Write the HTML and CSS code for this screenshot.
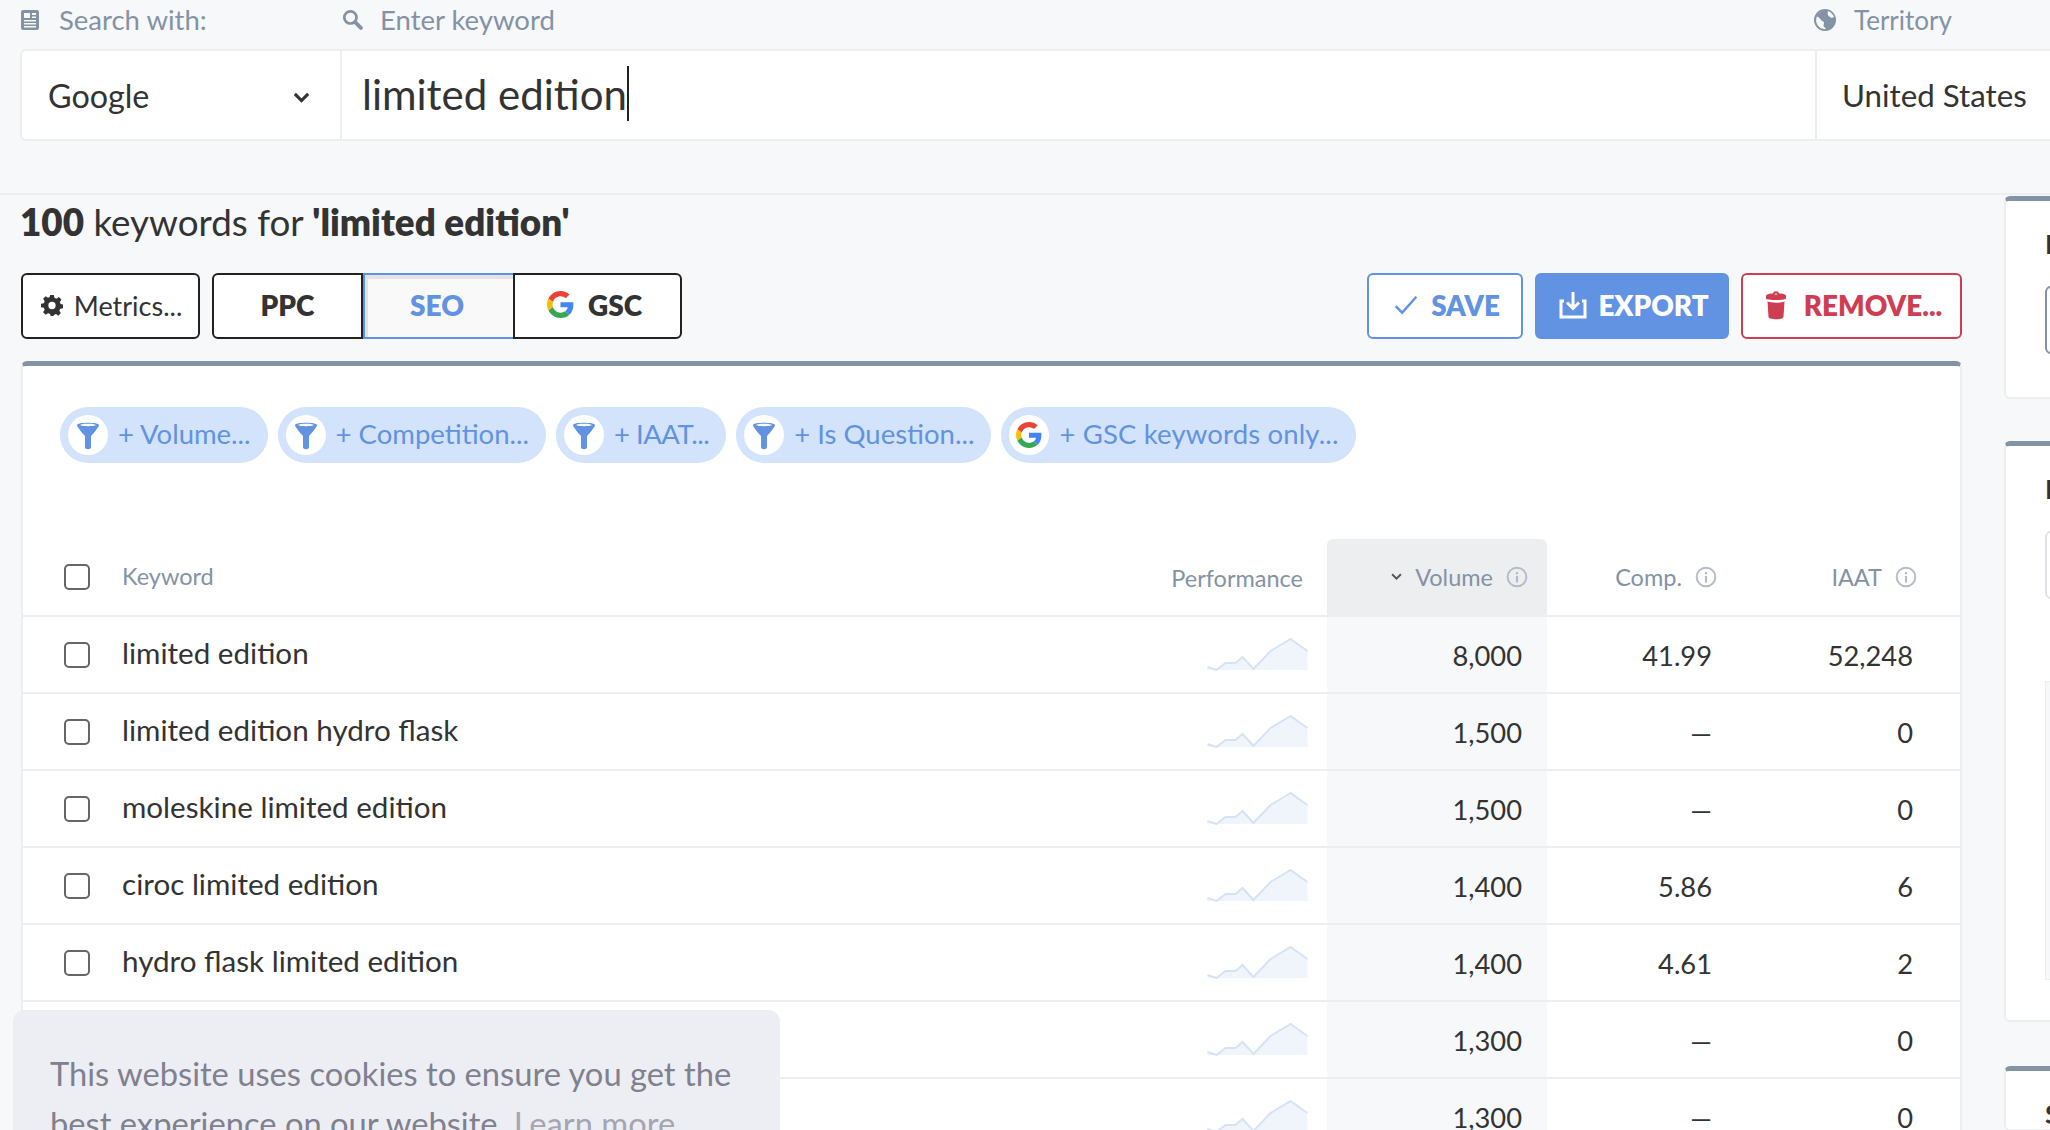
FILE: index.html
```html
<!DOCTYPE html>
<html lang="en">
  <head>
    <meta charset="UTF-8" />
    <title>Keyword Tool</title>
    <link rel="stylesheet" href="styles.css">
  </head>
  <body>
    <svg class="defs" width="0" height="0">
      <symbol id="spark" viewBox="0 0 100 33">
        <path d="M0 29L9 32L18 25L28 25L35 19L46 31L63 13L83 1L100 13V32H0Z" fill="#f0f4fb" />
        <path d="M0 29L9 32L18 25L28 25L35 19L46 31L63 13L83 1L100 13" fill="none" stroke="#d6e3f7" stroke-width="2" />
      </symbol>
      <symbol id="info" viewBox="0 0 20 20">
        <circle cx="10" cy="10" r="8.5" fill="none" stroke="#b5bcc7" stroke-width="1.8" />
        <rect x="9" y="9" width="2" height="6" fill="#b5bcc7" />
        <rect x="9" y="5.5" width="2" height="2" fill="#b5bcc7" />
      </symbol>
      <symbol id="funnel" viewBox="0 0 24 30">
        <path d="M1 5C1 2 23 2 23 5C23 7 17 14 15 16V27C15 30 9 30 9 27V16C7 14 1 7 1 5Z" fill="#6293e2" />
        <path d="M4 5C6 3.4 18 3.4 20 5C18 6.6 6 6.6 4 5Z" fill="#fff" />
      </symbol>
      <symbol id="google" viewBox="0 0 48 48">
        <path fill="#ea4335" d="M24 9.5c3.5 0 6.7 1.3 9.2 3.4l6.9-6.9C35.900 2.300 30.300 0 24 0 14.600 0 6.500 5.400 2.600 13.200l8 6.200C12.500 13.600 17.800 9.500 24 9.500z" />
        <path fill="#4285f4" d="M47 24.500c0-1.600-.1-3.100-.4-4.500H24v9h12.900c-.6 3-2.200 5.500-4.700 7.200l7.700 6C44.400 37.900 47 31.800 47 24.500z" />
        <path fill="#fbbc05" d="M10.600 28.600c-.5-1.400-.8-3-.8-4.600s.3-3.200.8-4.600l-8-6.200C.9 16.500 0 20.100 0 24s.9 7.500 2.600 10.800l8-6.200z" />
        <path fill="#34a853" d="M24 48c6.500 0 11.900-2.100 15.900-5.800l-7.700-6c-2.200 1.400-4.900 2.300-8.200 2.300-6.200 0-11.500-4.100-13.400-9.900l-8 6.200C6.500 42.600 14.600 48 24 48z" />
      </symbol>
    </svg>

    <header class="search">
      <div class="search-labels">
        <div class="search-label">
          <svg class="label-icon" viewBox="0 0 18 20"><path fill-rule="evenodd" d="M2 0H16A2 2 0 0 1 18 2V18A2 2 0 0 1 16 20H2A2 2 0 0 1 0 18V2A2 2 0 0 1 2 0ZM3 3V8H9V3ZM11 3V5H15V3ZM11 6.500V8H15V6.500ZM3 10V11.500H15V10ZM3 13V14.500H15V13ZM3 16V17.500H15V16Z" fill="#8492a6" /></svg>
          <span>Search with:</span>
        </div>
        <div class="search-label search-label-keyword">
          <svg class="label-icon" viewBox="0 0 20 20"><circle cx="8" cy="8" r="5.800" fill="none" stroke="#8492a6" stroke-width="2.600" /><path d="M12.500 12.500L18 18" stroke="#8492a6" stroke-width="3.600" stroke-linecap="round" /></svg>
          <span>Enter keyword</span>
        </div>
        <div class="search-label territory-label">
          <svg class="label-icon globe" viewBox="0 0 22 22"><circle cx="11" cy="11" r="11" fill="#8492a6" /><path d="M10 1.500C7 2 4 4.500 3 7.500L5 8.500L8 12L10 13L9.500 17L12 20C10 20.500 5 20 2.500 14C1 9 4 3 10 1.500ZM14 2C17 3 19.500 6 20 8L17.500 9L14.500 7L13.500 5Z" fill="#f7f8fa" /></svg>
          <span>Territory</span>
        </div>
      </div>
      <div class="search-box">
        <div class="engine">
          <span>Google</span>
          <svg class="chevron" viewBox="0 0 14 9"><path d="M1.500 1.500L7 7L12.500 1.500" fill="none" stroke="#333" stroke-width="2.600" /></svg>
        </div>
        <div class="keyword-input"><span>limited edition</span><i class="caret"></i></div>
        <div class="territory">United States</div>
      </div>
    </header>

    <div class="layout">
      <main class="results">
        <h1 class="results-title"><b>100</b> keywords for <b>'limited edition'</b></h1>

        <div class="toolbar">
          <button class="btn btn-dark btn-metrics">
            <svg class="btn-icon-sm gear" viewBox="0 0 24 24"><path fill-rule="evenodd" d="M10 1H14L14.600 4.200L16.800 5.100L19.500 3.300L22.300 6.100L20.500 8.800L21.400 11L24 11.500V15.500L21 16L20 18.200L21.700 20.800L18.900 23.600L16.300 21.900L14.100 22.800L13.500 24H10.500L9.900 21.800L7.700 20.900L5.100 22.600L2.300 19.800L4 17.200L3.100 15L0 14.500V10.500L3.100 10L4 7.800L2.300 5.200L5.100 2.400L7.700 4.100L9.400 3.400ZM12 8.500A4 4 0 1 0 12 16.500A4 4 0 1 0 12 8.500Z" fill="#333" /></svg>
            Metrics...
          </button>
          <div class="tabs">
            <button class="tab">PPC</button>
            <button class="tab tab-active">SEO</button>
            <button class="tab"><svg class="g-icon"><use href="#google" /></svg>GSC</button>
          </div>
          <div class="actions">
            <button class="btn btn-save">
              <svg class="btn-icon-sm" viewBox="0 0 22 18"><path d="M1.500 10L7.500 16L20.500 1.500" fill="none" stroke="#6293e2" stroke-width="2.200" /></svg>
              SAVE
            </button>
            <button class="btn btn-export">
              <svg class="btn-icon" viewBox="0 0 28 28"><path d="M14 1V17M8 11.500L14 17.500L20 11.500" fill="none" stroke="#fff" stroke-width="3" /><path d="M5 10H2V26H26V10H23" fill="none" stroke="#fff" stroke-width="3" /></svg>
              EXPORT
            </button>
            <button class="btn btn-remove">
              <svg class="btn-icon trash" viewBox="0 0 22 30"><path fill-rule="evenodd" d="M1 6C1 4 6 3.500 8 3.500C8.500 0.500 13.500 0.500 14 3.500C16 3.500 21 4 21 6V8.500C21 10.500 1 10.500 1 8.500ZM9.500 4.500C10 3 12 3 12.500 4.500Z" fill="#cf3d52" /><path d="M2.500 11.500C6 13 16 13 19.500 11.500L18.500 27C18 30 4 30 3.500 27Z" fill="#cf3d52" /></svg>
              REMOVE...
            </button>
          </div>
        </div>

        <section class="card">
          <div class="chips">
            <div class="chip"><span class="chip-icon"><svg><use href="#funnel" /></svg></span>+ Volume...</div>
            <div class="chip"><span class="chip-icon"><svg><use href="#funnel" /></svg></span>+ Competition...</div>
            <div class="chip chip-tight"><span class="chip-icon"><svg><use href="#funnel" /></svg></span>+ IAAT...</div>
            <div class="chip"><span class="chip-icon"><svg><use href="#funnel" /></svg></span>+ Is Question...</div>
            <div class="chip chip-wide"><span class="chip-icon"><svg class="chip-g"><use href="#google" /></svg></span>+ GSC keywords only...</div>
          </div>

          <div class="row row-head">
            <div class="cell-check"><span class="checkbox"></span></div>
            <div class="cell-name">Keyword</div>
            <div class="cell-perf">Performance</div>
            <div class="cell-num cell-volume">
              <svg class="sort" viewBox="0 0 10 7"><path d="M1 1L5 5L9 1" fill="none" stroke="#555" stroke-width="1.800" /></svg>
              Volume <svg class="info"><use href="#info" /></svg>
            </div>
            <div class="cell-num cell-comp">Comp. <svg class="info"><use href="#info" /></svg></div>
            <div class="cell-num cell-iaat">IAAT <svg class="info"><use href="#info" /></svg></div>
          </div>

          <div class="row">
            <div class="cell-check"><span class="checkbox"></span></div>
            <div class="cell-keyword">limited edition</div>
            <div class="cell-spark"><svg class="spark"><use href="#spark" /></svg></div>
            <div class="cell-num cell-volume">8,000</div>
            <div class="cell-num cell-comp">41.99</div>
            <div class="cell-num cell-iaat">52,248</div>
          </div>
          <div class="row">
            <div class="cell-check"><span class="checkbox"></span></div>
            <div class="cell-keyword">limited edition hydro flask</div>
            <div class="cell-spark"><svg class="spark"><use href="#spark" /></svg></div>
            <div class="cell-num cell-volume">1,500</div>
            <div class="cell-num cell-comp">—</div>
            <div class="cell-num cell-iaat">0</div>
          </div>
          <div class="row">
            <div class="cell-check"><span class="checkbox"></span></div>
            <div class="cell-keyword">moleskine limited edition</div>
            <div class="cell-spark"><svg class="spark"><use href="#spark" /></svg></div>
            <div class="cell-num cell-volume">1,500</div>
            <div class="cell-num cell-comp">—</div>
            <div class="cell-num cell-iaat">0</div>
          </div>
          <div class="row">
            <div class="cell-check"><span class="checkbox"></span></div>
            <div class="cell-keyword">ciroc limited edition</div>
            <div class="cell-spark"><svg class="spark"><use href="#spark" /></svg></div>
            <div class="cell-num cell-volume">1,400</div>
            <div class="cell-num cell-comp">5.86</div>
            <div class="cell-num cell-iaat">6</div>
          </div>
          <div class="row">
            <div class="cell-check"><span class="checkbox"></span></div>
            <div class="cell-keyword">hydro flask limited edition</div>
            <div class="cell-spark"><svg class="spark"><use href="#spark" /></svg></div>
            <div class="cell-num cell-volume">1,400</div>
            <div class="cell-num cell-comp">4.61</div>
            <div class="cell-num cell-iaat">2</div>
          </div>
          <div class="row">
            <div class="cell-check"></div>
            <div class="cell-keyword"></div>
            <div class="cell-spark"><svg class="spark"><use href="#spark" /></svg></div>
            <div class="cell-num cell-volume">1,300</div>
            <div class="cell-num cell-comp">—</div>
            <div class="cell-num cell-iaat">0</div>
          </div>
          <div class="row">
            <div class="cell-check"></div>
            <div class="cell-keyword"></div>
            <div class="cell-spark"><svg class="spark"><use href="#spark" /></svg></div>
            <div class="cell-num cell-volume">1,300</div>
            <div class="cell-num cell-comp">—</div>
            <div class="cell-num cell-iaat">0</div>
          </div>
        </section>
      </main>

      <aside class="side">
        <section class="side-card side-card-one">
          <h3 class="side-title">Keyword</h3>
          <div class="side-input side-input-dark"></div>
        </section>
        <section class="side-card side-card-two">
          <h3 class="side-title">Keyword</h3>
          <div class="side-input"></div>
          <div class="side-chart"></div>
        </section>
        <section class="side-card">
          <h3 class="side-title">SERP</h3>
        </section>
      </aside>
    </div>

    <div class="cookie">This website uses cookies to ensure you get the best experience on our website. <a>Learn more</a></div>
  </body>
</html>
```

FILE: styles.css
```css
* {
  box-sizing: border-box;
}

html,
body {
  height: 1130px;
  overflow: hidden;
}

body {
  margin: 0;
  width: 2050px;
  font-family: Lato, "Open Sans", sans-serif;
  color: #333;
  background-color: #f7f8fa;
}

button {
  font-family: inherit;
  cursor: pointer;
}

.defs {
  position: absolute;
}

/* search header */
.search {
  height: 195px;
  padding-left: 20px;
  border-bottom: 2px solid #eceef0;
}

.search-labels {
  display: grid;
  grid-template-columns: 320px 1475px 260px;
  height: 49px;
}

.search-label {
  display: flex;
  align-items: center;
  height: 39px;
  font-size: 27.5px;
  color: #8492a6;
}

.label-icon {
  width: 18px;
  height: 20px;
  margin-right: 20px;
  margin-left: 1px;
}

.search-label-keyword .label-icon {
  width: 21px;
  height: 21px;
  margin-right: 17px;
  margin-left: 2px;
}

.territory-label {
  margin-left: -2px;
  font-size: 26px;
}

.territory-label .globe {
  width: 22px;
  height: 22px;
  margin-right: 18px;
}

.search-box {
  display: grid;
  grid-template-columns: 320px 1475px 260px;
  height: 92px;
  background-color: #fff;
  border: 2px solid #eceef0;
  border-right: 0;
  border-radius: 6px 0 0 6px;
}

.engine {
  display: flex;
  align-items: center;
  justify-content: space-between;
  padding: 0 30px 0 26px;
  font-size: 32.300px;
  border-right: 2px solid #eceef0;
}

.chevron {
  width: 17px;
  height: 11px;
  margin-top: 4px;
}

.keyword-input {
  display: flex;
  align-items: center;
  padding: 0 0 3px 20px;
  font-size: 42px;
  border-right: 2px solid #eceef0;
}

.caret {
  width: 2px;
  height: 55px;
  background-color: #222;
}

.territory {
  display: flex;
  align-items: center;
  padding-left: 25px;
  font-size: 31.300px;
}

/* main column */
.layout {
  display: flex;
  gap: 42px;
  padding-left: 21px;
}

.results {
  flex: none;
  width: 1941px;
}

.results-title {
  margin: 0 0 0 -1px;
  padding-top: 5px;
  font-size: 36.800px;
  font-weight: 400;
  line-height: 44px;
}

.results-title b {
  font-weight: 800;
}

.toolbar {
  display: flex;
  gap: 12px;
  margin-top: 29px;
}

.btn {
  display: flex;
  align-items: center;
  justify-content: center;
  gap: 11px;
  height: 66px;
  padding: 0 0 2px;
  font-size: 27px;
  background-color: #fff;
  border: 2px solid #222;
  border-radius: 6px;
}

.btn-metrics {
  width: 179px;
  padding-left: 2px;
  color: #333;
}

.btn-icon-sm {
  width: 24px;
  height: 24px;
}

.gear {
  width: 22px;
  height: 22px;
}

.btn-icon {
  width: 28px;
  height: 30px;
}

.trash {
  width: 22px;
}

.tabs {
  display: grid;
  grid-template-columns: 151px 150px 169px;
  height: 66px;
}

.tab {
  display: flex;
  align-items: center;
  justify-content: center;
  padding: 0 0 3px;
  font-size: 28px;
  font-weight: 800;
  color: #333;
  background-color: #fff;
  border: 2px solid #222;
  border-left: 0;
}

.tab:first-child {
  border-left: 2px solid #222;
  border-radius: 6px 0 0 6px;
}

.tab:last-child {
  padding-right: 6px;
  border-left: 2px solid #222;
  border-radius: 0 6px 6px 0;
}

.tab-active {
  padding-right: 4px;
  color: #6293e2;
  background-color: #f9f9f9;
  border: 2px solid #6293e2;
  border-right: 0;
  box-shadow: inset 3px 4px 0 #e2e3e5;
}

.g-icon {
  width: 27px;
  height: 27px;
  margin-right: 14px;
}

.actions {
  display: flex;
  gap: 12px;
  margin-left: auto;
}

.btn-save,
.btn-export,
.btn-remove {
  padding-left: 4px;
  font-size: 27.800px;
  font-weight: 800;
}

.btn-save {
  width: 156px;
  gap: 13px;
  color: #6293e2;
  border-color: #6293e2;
}

.btn-export {
  width: 194px;
  color: #fff;
  background-color: #6293e2;
  border-color: #6293e2;
}

.btn-remove {
  width: 221px;
  gap: 17px;
  color: #cf3d52;
  border-color: #cf3d52;
}

/* table card */
.card {
  margin-top: 22px;
  background-color: #fff;
  border: 2px solid #eceef0;
  border-top: 5px solid #8492a6;
  border-radius: 6px 6px 0 0;
}

.chips {
  display: flex;
  gap: 10px;
  height: 173px;
  padding: 41px 0 0 37px;
}

.chip {
  display: flex;
  align-items: center;
  height: 56px;
  padding: 0 17px 3px 8px;
  font-size: 27.500px;
  color: #6293e2;
  background-color: #d2e3fb;
  border-radius: 28px;
}

.chip-tight {
  letter-spacing: -0.5px;
}

.chip-wide {
  letter-spacing: 0.15px;
}

.chip-icon {
  display: flex;
  align-items: center;
  justify-content: center;
  width: 40px;
  height: 40px;
  margin: 3px 10px 0 0;
  background-color: #fff;
  border-radius: 50%;
}

.chip-icon svg {
  width: 24px;
  height: 30px;
}

.chip-icon .chip-g {
  width: 26px;
  height: 26px;
}

.row {
  display: grid;
  grid-template-columns: 99px 1fr 128px 220px 170px 243px;
  height: 77px;
  border-bottom: 2px solid #eceef0;
}

.row > div {
  display: flex;
  align-items: center;
}

.row-head {
  height: 78px;
  font-size: 23.500px;
  color: #8492a6;
}

.cell-check {
  padding-left: 41px;
}

.checkbox {
  width: 26px;
  height: 26px;
  background-color: #fff;
  border: 2px solid #666;
  border-radius: 5px;
}

.cell-name {
  padding-bottom: 2px;
}

.cell-keyword {
  padding-bottom: 4px;
  font-size: 29.600px;
}

.row-head .cell-perf {
  justify-content: flex-end;
  padding-right: 24px;
  padding-top: 1px;
  white-space: nowrap;
}

.cell-spark {
  padding-left: 8px;
}

.spark {
  width: 101px;
  height: 33px;
}

.row > .cell-num {
  justify-content: flex-end;
  padding-top: 1px;
  font-size: 27.300px;
}

.row-head > .cell-num {
  gap: 13px;
  padding-top: 0;
  font-size: 23.500px;
}

.row > .cell-volume {
  padding-right: 25px;
  background-color: #f7f8fa;
}

.row-head > .cell-volume {
  padding-right: 19px;
  background-color: #eceef0;
  border-radius: 6px 6px 0 0;
}

.row > .cell-comp {
  padding-right: 5px;
}

.row-head > .cell-comp {
  padding-right: 0;
}

.row > .cell-iaat {
  padding-right: 47px;
}

.row-head > .cell-iaat {
  padding-right: 43px;
}

.info {
  width: 22px;
  height: 22px;
}

.sort {
  width: 11px;
  height: 8px;
  margin-right: 0;
}

/* right column */
.side {
  flex: none;
  width: 400px;
  margin-top: 1px;
}

.side-card {
  padding: 28px 0 0 39px;
  background-color: #fff;
  border: 2px solid #eceef0;
  border-top: 5px solid #8492a6;
  border-radius: 6px;
}

.side-card-one {
  height: 203px;
  margin-bottom: 42px;
}

.side-card-two {
  height: 581px;
  margin-bottom: 44px;
}

.side-title {
  margin: 0;
  font-size: 27px;
  line-height: 30px;
}

.side-input {
  height: 68px;
  margin-top: 27px;
  border: 2px solid #dfe1e6;
  border-radius: 6px;
}

.side-input-dark {
  border-color: #8492a6;
}

.side-chart {
  height: 299px;
  margin-top: 82px;
  background-color: #f7f8fa;
  border: 1px solid #eceef0;
}

/* cookie notice */
.cookie {
  position: fixed;
  left: 13px;
  top: 1010px;
  width: 767px;
  height: 200px;
  padding: 39px 30px 0 37px;
  font-size: 32.700px;
  line-height: 50px;
  color: #80808f;
  background-color: #edeef3;
  border-radius: 12px;
}

.cookie a {
  color: #a5a5b2;
}
```
